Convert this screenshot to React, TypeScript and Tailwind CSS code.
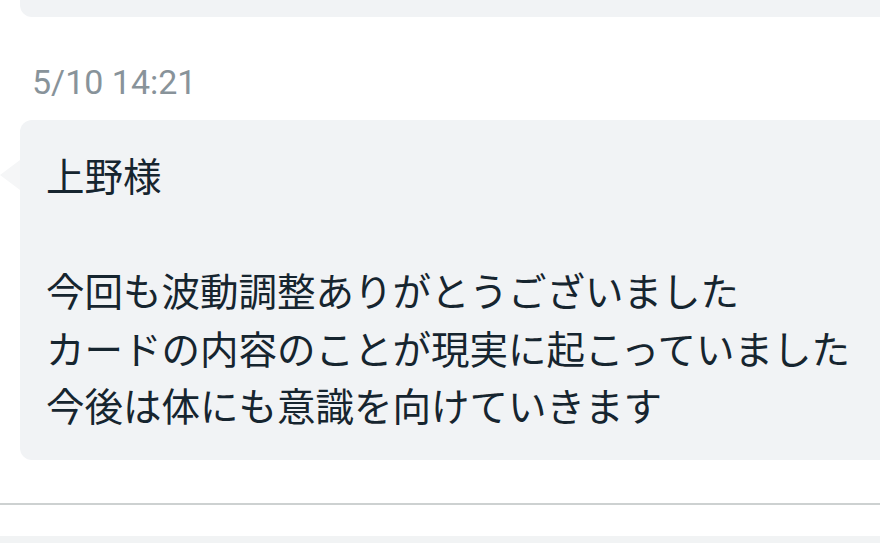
export default function App() {
  const lines = [
    "上野様",
    "",
    "今回も波動調整ありがとうございました",
    "カードの内容のことが現実に起こっていました",
    "今後は体にも意識を向けていきます",
  ];

  return (
    <div className="w-[880px] h-[543px] overflow-hidden bg-white flex flex-col">
      {/* previous message bubble, cut off at the top */}
      <div className="ml-[20px] h-[17px] shrink-0 rounded-bl-xl bg-[#f1f3f5]" />

      {/* timestamp */}
      <div
        className="mt-[45px] ml-[32px] h-[40px] leading-[40px] text-[34px] text-[#88939a]"
        style={{ fontFamily: "Roboto, 'Noto Sans', sans-serif" }}
      >
        5/10 14:21
      </div>

      {/* message bubble */}
      <div className="relative mt-[18px] ml-[20px] shrink-0">
        <div className="absolute left-[-20px] top-[40px] w-0 h-0 border-y-[15px] border-y-transparent border-r-[20px] border-r-[#f5f6f7]" />
        <div
          className="rounded-l-xl bg-[#f1f3f5] pl-[26px] pt-[26px] pb-[26px] text-[38.5px] leading-[57.5px] text-[#16252f] whitespace-nowrap"
          style={{ fontFamily: "'Noto Sans CJK JP', 'Noto Sans', sans-serif" }}
        >
          {lines.map((l, i) => (
            <div key={i} className="h-[57.5px]">
              {l}
            </div>
          ))}
        </div>
      </div>

      {/* divider */}
      <div className="mt-[43px] h-[2px] shrink-0 bg-[#cdd1d1]" />
      <div className="h-[31px] shrink-0" />
      <div className="flex-1 bg-[#f1f3f4]" />
    </div>
  );
}
